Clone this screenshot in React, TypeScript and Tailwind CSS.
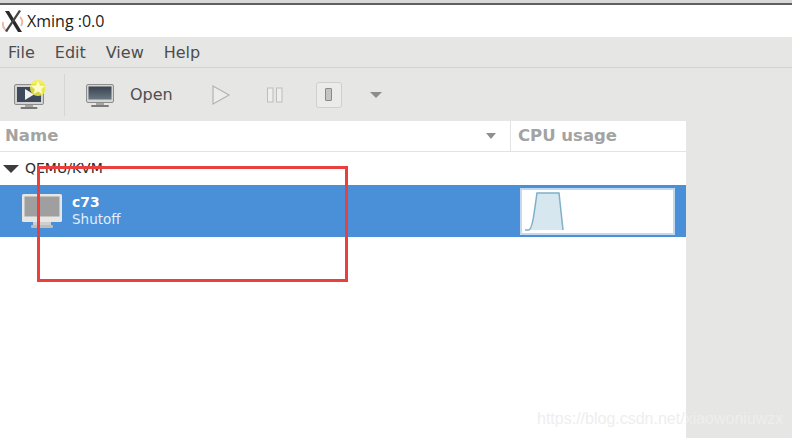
const menus = ["File", "Edit", "View", "Help"]

function NewVmIcon() {
    return (
        <svg width="34" height="32" viewBox="0 0 34 32">
            <rect x="1.5" y="5.5" width="29" height="20" rx="1.5" fill="#d2d2d0" stroke="#8d8d8b" />
            <rect x="4" y="8" width="24" height="15" fill="#3d4a5c" />
            <polygon points="12,10 12,21 21,15.5" fill="#f1f1ee" />
            <rect x="12" y="26" width="8" height="2" fill="#a5a5a3" />
            <rect x="7.5" y="28" width="17" height="2" rx="1" fill="#77777a" />
            <circle cx="25" cy="9" r="8" fill="#f3ee3c" opacity="0.85" />
            <polygon points="25,2 27,6.5 32,7 28.2,10.2 29.3,15 25,12.5 20.7,15 21.8,10.2 18,7 23,6.5" fill="#fdfbc8" />
        </svg>
    )
}

function MonitorIcon() {
    return (
        <svg width="30" height="28" viewBox="0 0 30 28">
            <defs>
                <linearGradient id="screen" x1="0" y1="0" x2="0" y2="1">
                    <stop offset="0" stopColor="#39424f" />
                    <stop offset="1" stopColor="#6b7684" />
                </linearGradient>
            </defs>
            <rect x="1.5" y="3.5" width="27" height="18" rx="1.5" fill="#d5d5d3" stroke="#8d8d8b" />
            <rect x="3.5" y="5.5" width="23" height="13" fill="url(#screen)" />
            <rect x="11" y="22" width="8" height="2" fill="#a5a5a3" />
            <rect x="6" y="24" width="18" height="2" rx="1" fill="#7c7c7c" />
        </svg>
    )
}

function App() {
    return (
        <div className="flex h-[438px] w-[792px] flex-col overflow-hidden bg-[#e6e6e5] font-['DejaVu_Sans',sans-serif]">
            <div className="h-[5px] shrink-0 border-b-2 border-[#5f5f5f] bg-[#d9d9d9]" />
            <div className="flex h-[32px] shrink-0 items-center gap-[3px] bg-white pl-[2px] pb-[1px]">
                <svg width="22" height="24" viewBox="0 0 22 24">
                    <path d="M1 13 Q0 20 6 22" fill="none" stroke="#eeb9a5" strokeWidth="2" />
                    <path d="M18 8 Q22 12 19 17" fill="none" stroke="#eeb9a5" strokeWidth="2" />
                    <path d="M3 2 L7 2 L20 23 L16 23 Z" fill="#2a2a2a" />
                    <path d="M17 1 L19 2 L5 23 L3 22 Z" fill="#444" />
                </svg>
                <span className="font-['Open_Sans',sans-serif] text-[16px] text-[#1c1c1c]">Xming :0.0</span>
            </div>
            <div className="flex h-[31px] shrink-0 items-center gap-[20px] border-b border-[#d3d3d2] pl-[8px] pt-[1px] text-[16px] text-[#4d4d4d]">
                {menus.map((menu) => (
                    <span key={menu}>{menu}</span>
                ))}
            </div>
            <div className="flex h-[53px] shrink-0 items-center pl-[13px]">
                <NewVmIcon />
                <div className="ml-[17px] h-[42px] w-px bg-[#d6d6d5]" />
                <div className="ml-[20px]">
                    <MonitorIcon />
                </div>
                <span className="ml-[15px] text-[16px] text-[#4f4f4f]">Open</span>
                <svg className="ml-[38px]" width="20" height="22" viewBox="0 0 20 22">
                    <polygon points="2,2 18,11 2,20" fill="#ececea" stroke="#b4b4b2" strokeWidth="1.2" />
                </svg>
                <svg className="ml-[35px]" width="18" height="16" viewBox="0 0 18 16">
                    <rect x="1.5" y="1" width="5.5" height="14" fill="#eeeeec" stroke="#bdbdbb" />
                    <rect x="10.5" y="1" width="5.5" height="14" fill="#eeeeec" stroke="#bdbdbb" />
                </svg>
                <div className="ml-[32px] flex size-[26px] items-center justify-center rounded-[3px] border border-[#cfcfce] bg-[#ebebea]">
                    <div className="h-[13px] w-[7px] rounded-[1px] border border-[#8a8a8a] bg-[#c4c4c4]" />
                </div>
                <div className="ml-[28px] size-0 border-x-[6px] border-t-[6px] border-x-transparent border-t-[#8c8c8c]" />
            </div>
            <div className="flex min-h-0 flex-1">
                <div className="flex w-[686px] shrink-0 flex-col bg-white">
                    <div className="flex h-[31px] shrink-0 border-b border-[#e3e3e3] text-[16.5px] font-bold text-[#a3a3a3]">
                        <div className="flex w-[511px] items-center justify-between border-r border-[#e3e3e3] pl-[5px] pr-[14px]">
                            <span>Name</span>
                            <div className="size-0 border-x-[5px] border-t-[6px] border-x-transparent border-t-[#8f8f8f]" />
                        </div>
                        <div className="flex items-center pl-[7px]">CPU usage</div>
                    </div>
                    <div className="flex h-[33px] shrink-0 items-center pl-[3px] text-[14px] text-[#2e2e2e]">
                        <div className="mr-[6px] size-0 border-x-[8px] border-t-[8px] border-x-transparent border-t-[#3c3c3c]" />
                        <span>QEMU/KVM</span>
                    </div>
                    <div className="flex h-[52px] shrink-0 items-center bg-[#4a90d9] text-white">
                        <svg className="ml-[21px]" width="42" height="36" viewBox="0 0 42 36">
                            <rect x="1" y="1" width="40" height="28" rx="1.5" fill="#e6e6e4" />
                            <rect x="3.5" y="3.5" width="35" height="20" fill="#9f9f9f" />
                            <rect x="12" y="29" width="18" height="3" fill="#cfcfcd" />
                            <rect x="10" y="32" width="22" height="3" rx="1" fill="#bdbdbb" />
                        </svg>
                        <div className="ml-[9px] flex w-[448px] flex-col leading-[17px]">
                            <span className="text-[14px] font-bold">c73</span>
                            <span className="text-[13.5px] text-[#e1edf9]">Shutoff</span>
                        </div>
                        <div className="h-[47px] w-[155px] border-2 border-[#c3d9ef] bg-white">
                            <svg width="151" height="43" viewBox="0 0 151 43">
                                <path d="M3 40 L7 40 Q10 38 12 24 L15 3 L37 3 L41 40 Z" fill="#d6e7f0" />
                                <path d="M3 40 L7 40 Q10 38 12 24 L15 3 L37 3 L41 40" fill="none" stroke="#7fb0c8" strokeWidth="1.5" />
                            </svg>
                        </div>
                    </div>
                </div>
            </div>
            <div className="absolute left-[37px] top-[166px] h-[116px] w-[311px] border-[3px] border-[#e8403f]" />
            <div className="absolute left-[537px] top-[407px] font-['Liberation_Sans',sans-serif] text-[16px] text-[#eeeeee]">
                https://blog.csdn.net/xiaowoniuwzx
            </div>
        </div>
    )
}

export default App
